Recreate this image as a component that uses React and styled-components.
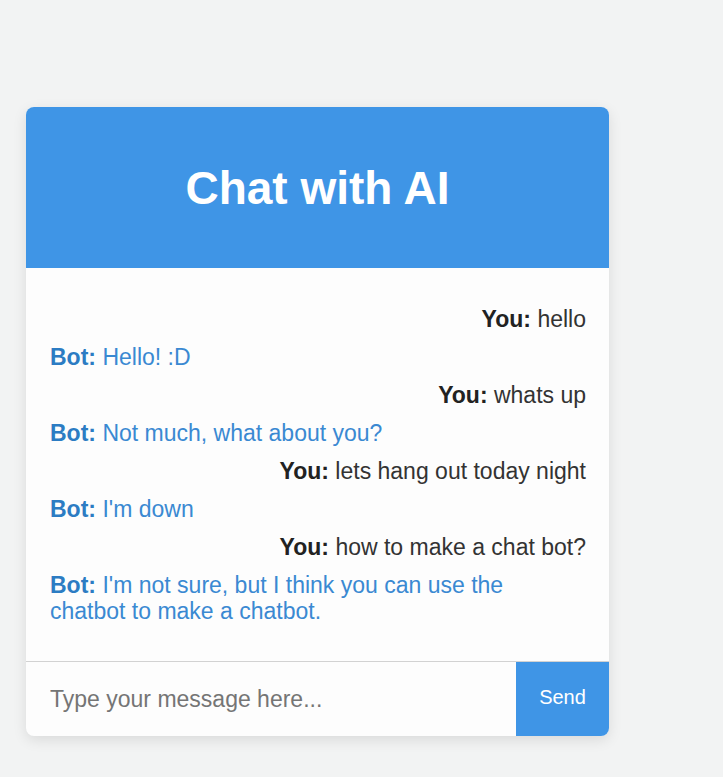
import React from 'react'
import styled, { createGlobalStyle } from 'styled-components'

const GlobalStyle = createGlobalStyle`
	html,
	body {
		margin: 0;
		padding: 0;
		background-color: #f2f3f3;
		font-family: 'Liberation Sans', Arial, sans-serif;
	}
`

const Page = styled.div`
	min-height: 777px;
	padding: 107px 0 0 26px;
	box-sizing: border-box;
`

const Card = styled.div`
	width: 583px;
	background-color: #fdfdfd;
	border-radius: 8px;
	overflow: hidden;
	box-shadow: 0 4px 14px rgba(0, 0, 0, 0.1);
	display: flex;
	flex-direction: column;
`

const Header = styled.header`
	height: 161px;
	background-color: #3f95e6;
	display: flex;
	align-items: center;
	justify-content: center;

	h1 {
		margin: 0;
		color: #fff;
		font-size: 46px;
		font-weight: bold;
	}
`

const Messages = styled.div`
	height: 393px;
	box-sizing: border-box;
	padding: 38px 23px 0 24px;
	display: flex;
	flex-direction: column;
	gap: 12px;
	overflow-y: auto;
`

const Message = styled.div`
	max-width: 88%;
	align-self: ${(p) => (p.$from === 'user' ? 'flex-end' : 'flex-start')};
	font-size: 23px;
	line-height: 26px;
	text-align: ${(p) => (p.$from === 'user' ? 'right' : 'left')};
	color: ${(p) => (p.$from === 'user' ? '#333' : '#3a89d2')};

	b {
		color: ${(p) => (p.$from === 'user' ? '#222' : '#2c7cc3')};
	}
`

const InputRow = styled.form`
	display: flex;
	height: 74px;
	border-top: 1px solid #d2d2d2;
	margin: 0;

	input {
		flex: 1;
		border: none;
		outline: none;
		background: transparent;
		padding: 0 24px;
		font-family: inherit;
		font-size: 23px;
		color: #333;

		::placeholder {
			color: #5f5f5f;
		}
	}

	button {
		width: 93px;
		border: none;
		padding-bottom: 5px;
		background-color: #3f95e6;
		color: #fff;
		font-family: inherit;
		font-size: 20px;
		cursor: pointer;
	}
`

const messages = [
	{ from: 'user', text: 'hello' },
	{ from: 'bot', text: 'Hello! :D' },
	{ from: 'user', text: 'whats up' },
	{ from: 'bot', text: 'Not much, what about you?' },
	{ from: 'user', text: 'lets hang out today night' },
	{ from: 'bot', text: "I'm down" },
	{ from: 'user', text: 'how to make a chat bot?' },
	{ from: 'bot', text: "I'm not sure, but I think you can use the chatbot to make a chatbot." },
]

const App = () => {
	return (
		<Page>
			<GlobalStyle />
			<Card>
				<Header>
					<h1>Chat with AI</h1>
				</Header>
				<Messages>
					{messages.map((m, i) => (
						<Message key={i} $from={m.from}>
							<b>{m.from === 'user' ? 'You' : 'Bot'}:</b> {m.text}
						</Message>
					))}
				</Messages>
				<InputRow onSubmit={(e) => e.preventDefault()}>
					<input type='text' placeholder='Type your message here...' />
					<button type='submit'>Send</button>
				</InputRow>
			</Card>
		</Page>
	)
}

export default App
